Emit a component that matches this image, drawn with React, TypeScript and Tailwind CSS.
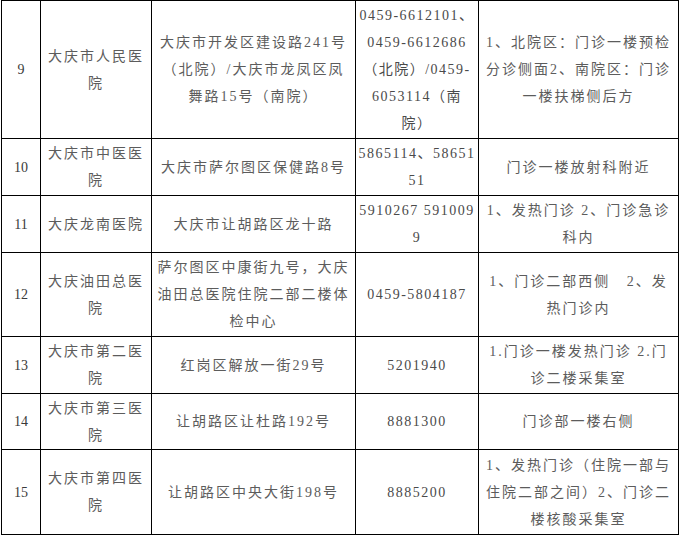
type Row = {
  no: string;
  name: string[];
  address: string[];
  phone: string[];
  place: string[];
  h: string;
};

const rows: Row[] = [
  {
    no: "9",
    name: ["大庆市人民医", "院"],
    address: ["大庆市开发区建设路241号", "（北院）/大庆市龙凤区凤", "舞路15号（南院）"],
    phone: ["0459-6612101、", "0459-6612686", "（北院）/0459-", "6053114（南", "院）"],
    place: ["1、北院区：门诊一楼预检", "分诊侧面2、南院区：门诊", "一楼扶梯侧后方"],
    h: "h-[138px]",
  },
  {
    no: "10",
    name: ["大庆市中医医", "院"],
    address: ["大庆市萨尔图区保健路8号"],
    phone: ["5865114、58651", "51"],
    place: ["门诊一楼放射科附近"],
    h: "h-[57px]",
  },
  {
    no: "11",
    name: ["大庆龙南医院"],
    address: ["大庆市让胡路区龙十路"],
    phone: ["5910267 591009", "9"],
    place: ["1、发热门诊 2、门诊急诊", "科内"],
    h: "h-[57px]",
  },
  {
    no: "12",
    name: ["大庆油田总医", "院"],
    address: ["萨尔图区中康街九号，大庆", "油田总医院住院二部二楼体", "检中心"],
    phone: ["0459-5804187"],
    place: ["1、门诊二部西侧   2、发", "热门诊内"],
    h: "h-[84px]",
  },
  {
    no: "13",
    name: ["大庆市第二医", "院"],
    address: ["红岗区解放一街29号"],
    phone: ["5201940"],
    place: ["1.门诊一楼发热门诊 2.门", "诊二楼采集室"],
    h: "h-[57px]",
  },
  {
    no: "14",
    name: ["大庆市第三医", "院"],
    address: ["让胡路区让杜路192号"],
    phone: ["8881300"],
    place: ["门诊部一楼右侧"],
    h: "h-[56px]",
  },
  {
    no: "15",
    name: ["大庆市第四医", "院"],
    address: ["让胡路区中央大街198号"],
    phone: ["8885200"],
    place: ["1、发热门诊（住院一部与", "住院二部之间）2、门诊二", "楼核酸采集室"],
    h: "h-[85px]",
  },
];

function Lines({ lines }: { lines: string[] }) {
  return (
    <>
      {lines.map((l, i) => (
        <div key={i} className="whitespace-pre">
          {l}
        </div>
      ))}
    </>
  );
}

export default function App() {
  return (
    <div className="w-[679px] h-[536px] bg-white overflow-hidden pl-px">
      <table
        className="table-fixed border-collapse w-[677px] text-[14px] leading-[27px] tracking-[2px] text-[#5c5c5c] text-center"
        style={{ fontFamily: '"Liberation Serif", "Noto Sans CJK SC", serif' }}
      >
        <colgroup>
          <col className="w-[39px]" />
          <col className="w-[111px]" />
          <col className="w-[204px]" />
          <col className="w-[123px]" />
          <col className="w-[200px]" />
        </colgroup>
        <tbody>
          {rows.map((r) => (
            <tr key={r.no} className={r.h}>
              <td className="border border-black p-0 align-middle tracking-normal text-[#3a3a3a]">{r.no}</td>
              <td className="border border-black px-1 py-0 align-middle">
                <Lines lines={r.name} />
              </td>
              <td className="border border-black px-1 py-0 align-middle">
                <Lines lines={r.address} />
              </td>
              <td className="border border-black p-0 align-middle tracking-[1.5px] text-[#4a4a4a]">
                <Lines lines={r.phone} />
              </td>
              <td className="border border-black px-1 py-0 align-middle">
                <Lines lines={r.place} />
              </td>
            </tr>
          ))}
        </tbody>
      </table>
    </div>
  );
}
